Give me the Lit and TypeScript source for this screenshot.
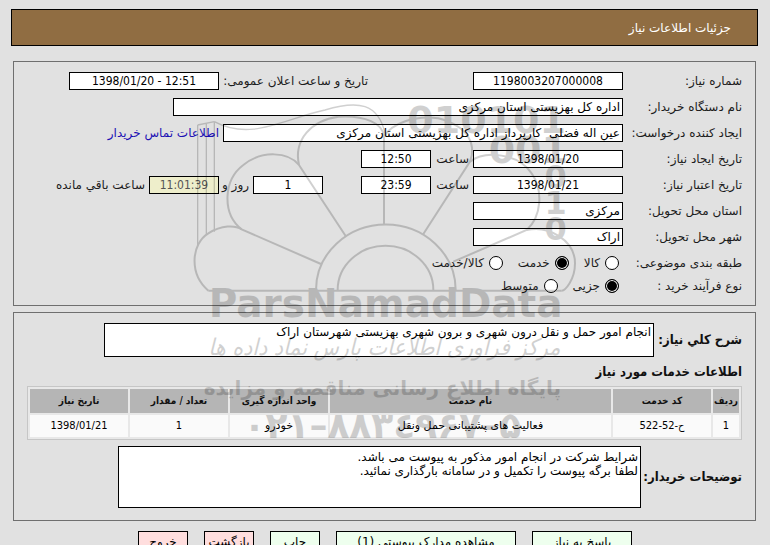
import { LitElement, html, css, svg } from "lit";
import { customElement } from "lit/decorators.js";

@customElement("page-watermark")
class PageWatermark extends LitElement {
  static styles = css`
    :host { display: block; }
    svg { display: block; width: 400px; height: 360px; overflow: visible; }
    .mark { opacity: 0.18; }
    .lines { fill: none; stroke: #000; stroke-width: 6; }
    .thin { stroke-width: 4; }
    text { font-family: "DejaVu Sans", sans-serif; font-weight: bold; text-anchor: middle; }
    .bits { font-size: 114px; }
    .small { font-size: 96px; }
    .brand { font-size: 117px; }
    .tag { font-family: "DejaVu Sans Condensed", "DejaVu Sans", sans-serif; font-weight: normal; font-style: italic; font-size: 69px; }
    .site { font-size: 60px; }
    .phone { font-size: 108px; }
  `;

  render() {
    return html`<svg viewBox="0 0 1200 1080" aria-hidden="true">${svg`
      <g class="mark">
        <g class="lines">
          <path d="M458 600 A143 132 0 0 1 745 600 M393 600 A209 196 0 0 1 812 600"/>
          <path d="M70 602 C10 550 20 460 70 430 C110 405 150 405 170 418 L408 522"/>
          <path d="M170 418 C110 370 115 270 175 225 C230 180 310 185 342 225 L482 438"/>
          <path d="M342 225 C325 150 380 90 460 80 C540 75 595 100 597 140 V405"/>
          <path d="M597 140 C620 100 690 75 760 85 C850 110 875 160 855 215 L715 432"/>
          <path d="M855 215 C900 180 1000 190 1040 250 C1075 300 1070 380 1025 420 L805 515"/>
          <path d="M1025 420 C1090 405 1170 450 1170 520 C1170 570 1140 602 1130 602"/>
          <path d="M70 602 H1130"/>
          <path class="thin" d="M88 95 C200 155 300 85 420 60 C520 30 580 40 600 130 M38 105 L88 95 M38 105 V465 M64 100 V435 M88 95 V425"/>
        </g>
        <text class="bits" x="905" y="130">010101</text>
        <text class="bits" x="1030" y="218">001</text>
        <text class="small" x="1112" y="293">0</text>
        <text class="small" x="1112" y="372">1</text>
        <text class="small" x="1112" y="450">0</text>
        <text class="brand" x="602" y="680">ParsNamadData</text>
        <text class="tag" x="598" y="795">مرکز فرآوری اطلاعات پارس نماد داده ها</text>
        <text class="site" x="592" y="915">پایگاه اطلاع رسانی مناقصه و مزایده</text>
        <text class="phone" x="592" y="1045">۰۲۱–۸۸۳٤۹۶۷–۵</text>
      </g>`}</svg>`;
  }
}

interface Service {
  row: string; code: string; name: string; unit: string; amount: string; date: string;
}

@customElement("app-root")
class AppRoot extends LitElement {
  static styles = css`
    :host {
      display: block; position: relative; height: 100vh; overflow: hidden; box-sizing: border-box;
      padding: 9px 12px 0 11px; background: #e1e1e1; color: #1c1c1c;
      font: 12px/18px "DejaVu Sans", sans-serif; direction: rtl;
    }
    * { box-sizing: border-box; }
    h1 {
      margin: 0 0 15px; height: 37px; padding: 0 26px; border: 1px solid #000;
      background: #906d42; color: #fff; font-size: 12px; line-height: 37px; font-weight: normal;
    }
    fieldset { margin: 0 2px 6px; padding: 10px 13px 0; border: 1px solid #6f6f6f; min-width: 0; }
    .request { padding-bottom: 5px; }
    .line { display: flex; gap: 4px; margin-bottom: 8px; height: 18px; white-space: pre; }
    .label { width: 115px; flex: none; }
    input, textarea, button { font: inherit; color: #000; border: 1px solid #000; border-radius: 0; margin: 0; }
    input[type="text"] {
      width: 70px; height: 18px; padding: 0 2px; background: #fff; text-align: center; flex: none;
      font-family: "DejaVu Sans Condensed", "DejaVu Sans", sans-serif;
    }
    input.mid { width: 150px; }
    input.buyer { width: 450px; }
    input.creator { width: 400px; }
    input[type="text"].start { text-align: right; font-family: "DejaVu Sans", sans-serif; }
    input[type="text"].left { background: #eeeecb; color: #555; }
    .public { margin-right: 101px; width: 145px; }
    .hour { width: 34px; }
    .days { margin-right: 34px; }
    .and { width: 26px; }
    a { color: #1c10b4; text-decoration: none; }
    .choices { align-items: center; height: 18px; margin-bottom: 5px; }
    .choices label { display: flex; align-items: center; gap: 5px; margin-left: 11px; }
    .choices label:first-of-type { margin-right: 4px; }
    input[type="radio"] {
      appearance: none; width: 14px; height: 14px; border-radius: 50%; background: #fff;
    }
    input[type="radio"]:checked { background: #000; box-shadow: inset 0 0 0 1px #fff; }
    .area { display: flex; align-items: center; gap: 4px; }
    .area label, h2 {
      font-family: "DejaVu Sans Condensed", "DejaVu Sans", sans-serif;
      font-size: 13px; font-weight: bold; color: #111; white-space: nowrap;
    }
    .area label { flex: none; }
    .sum { width: 84px; }
    .note { width: 97px; }
    textarea { display: block; resize: none; overflow: hidden; padding: 1px 2px; line-height: 14px; background: #fff; }
    .desc { width: 550px; height: 34px; }
    .remarks { width: 523px; height: 62px; padding-top: 3px; }
    h2 { margin: 5px 0 5px; line-height: 19px; }
    table {
      width: 100%; table-layout: fixed; border: 1px solid #c6c6c6; border-collapse: separate;
      border-spacing: 2px; background: #e8e8e8; margin-bottom: 6px; line-height: 22px;
      font-family: "DejaVu Sans Condensed", "DejaVu Sans", sans-serif; font-size: 11px;
    }
    th { background: #b5b5b5; padding: 0; height: 24px; font-size: 10px; font-weight: bold; color: #111; white-space: nowrap; }
    td { background: #fafafa; padding: 0; height: 22px; text-align: center; color: #000; }
    td.word { font-family: "DejaVu Sans", sans-serif; }
    .c-row { width: 26px; } .c-code { width: 98px; } .c-unit { width: 98px; }
    .details { padding-bottom: 12px; }
    .actions { display: flex; gap: 16px; margin-top: 10px; padding-right: 126px; }
    button { width: 50px; height: 22px; padding: 0; background: #eeffee; white-space: nowrap; line-height: 18px; }
    button.reply { width: 100px; }
    button.docs { width: 180px; }
    button.warn { background: #ffdede; }
    page-watermark { position: absolute; top: 90px; left: 50%; margin-left: -200px; pointer-events: none; direction: ltr; }
  `;

  private services: Service[] = [
    { row: "1", code: "ح-52-522", name: "فعالیت های پشتیبانی حمل ونقل", unit: "خودرو", amount: "1", date: "1398/01/21" },
  ];

  private radio(group: string, text: string, checked = false) {
    return html`<label><input type="radio" name=${group} ?checked=${checked}>${text}</label>`;
  }

  render() {
    return html`
      <h1>جزئیات اطلاعات نیاز</h1>
      <fieldset class="request">
        <div class="line">
          <label class="label" for="number">شماره نیاز:</label><input id="number" class="mid" type="text" value="1198003207000008">
          <label class="public" for="public">تاریخ و ساعت اعلان عمومی:</label><input id="public" class="mid" type="text" dir="ltr" value="1398/01/20 - 12:51">
        </div>
        <div class="line">
          <label class="label" for="buyer">نام دستگاه خریدار:</label><input id="buyer" class="buyer start" type="text" value="اداره کل بهزیستی استان مرکزی">
        </div>
        <div class="line">
          <label class="label" for="creator">ایجاد کننده درخواست:</label><input id="creator" class="creator start" type="text" value="عین اله فضلی  کارپرداز اداره کل بهزیستی استان مرکزی">
          <a href="#contact">اطلاعات تماس خریدار</a>
        </div>
        <div class="line">
          <label class="label" for="made">تاریخ ایجاد نیاز:</label><input id="made" class="mid" type="text" value="1398/01/20">
          <label class="hour" for="made-hour">ساعت</label><input id="made-hour" type="text" value="12:50">
        </div>
        <div class="line">
          <label class="label" for="valid">تاریخ اعتبار نیاز:</label><input id="valid" class="mid" type="text" value="1398/01/21">
          <label class="hour" for="valid-hour">ساعت</label><input id="valid-hour" type="text" value="23:59">
          <input id="days" class="days" type="text" value="1"><label class="and" for="days">روز و</label>
          <input id="left" class="left" type="text" value="11:01:39"><label for="left">ساعت باقي مانده</label>
        </div>
        <div class="line">
          <label class="label" for="province">استان محل تحویل:</label><input id="province" class="mid start" type="text" value="مرکزی">
        </div>
        <div class="line">
          <label class="label" for="city">شهر محل تحویل:</label><input id="city" class="mid start" type="text" value="اراک">
        </div>
        <div class="line choices" role="radiogroup" aria-labelledby="kind">
          <span class="label" id="kind">طبقه بندی موضوعی:</span>${this.radio("kind", "کالا")}${this.radio("kind", "خدمت", true)}${this.radio("kind", "کالا/خدمت")}
        </div>
        <div class="line choices" role="radiogroup" aria-labelledby="process">
          <span class="label" id="process">نوع فرآیند خرید :</span>${this.radio("process", "جزیی", true)}${this.radio("process", "متوسط")}
        </div>
      </fieldset>
      <fieldset class="details">
        <div class="area">
          <label class="sum" for="desc">شرح کلي نیاز:</label>
          <textarea id="desc" class="desc" .value=${"انجام امور حمل و نقل درون شهری و برون شهری بهزیستی شهرستان اراک"}></textarea>
        </div>
        <h2>اطلاعات خدمات مورد نیاز</h2>
        <table>
          <colgroup><col class="c-row"><col class="c-code"><col><col class="c-unit"><col class="c-unit"><col class="c-unit"></colgroup>
          <thead><tr><th>ردیف</th><th>کد خدمت</th><th>نام خدمت</th><th>واحد اندازه گیری</th><th>تعداد / مقدار</th><th>تاریخ نیاز</th></tr></thead>
          <tbody>${this.services.map((s) => html`<tr><td>${s.row}</td><td>${s.code}</td><td class="word">${s.name}</td><td class="word">${s.unit}</td><td>${s.amount}</td><td>${s.date}</td></tr>`)}</tbody>
        </table>
        <div class="area">
          <label class="note" for="remarks">توضیحات خریدار:</label>
          <textarea id="remarks" class="remarks" .value=${"شرایط شرکت در انجام امور مذکور به پیوست می باشد.\nلطفا برگه پیوست را تکمیل و در سامانه بارگذاری نمائید."}></textarea>
        </div>
      </fieldset>
      <div class="actions">
        <button class="reply">پاسخ به نیاز</button>
        <button class="docs">مشاهده مدارک پیوستی (1)</button>
        <button>چاپ</button>
        <button class="warn">بازگشت</button>
        <button class="warn">خروج</button>
      </div>
      <page-watermark></page-watermark>
    `;
  }
}
